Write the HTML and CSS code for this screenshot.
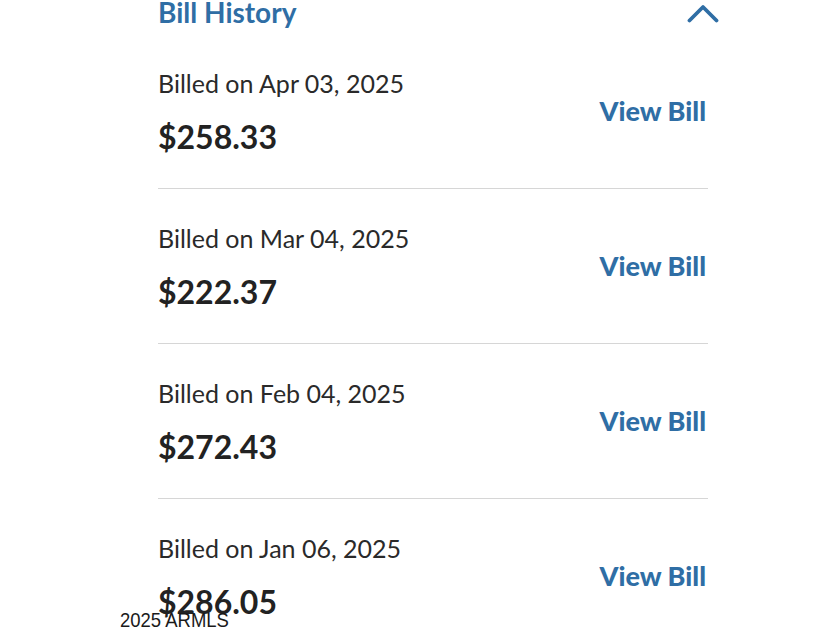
FILE: index.html
```html
<!DOCTYPE html>
<html>
<head>
<meta charset="utf-8">
<link rel="stylesheet" href="styles.css">
</head>
<body>
<div class="page">
  <section class="history">
    <header class="history-head">
      <h2 class="history-title">Bill History</h2>
      <svg class="chevron" width="32" height="20" viewBox="0 0 32 20" aria-hidden="true">
        <path d="M2.5 16.5 L16 3 L29.5 16.5" fill="none" stroke="#2f6ea5" stroke-width="3.8" stroke-linecap="round" stroke-linejoin="round"/>
      </svg>
    </header>
    <ul class="bill-list">
      <li class="bill">
        <div class="bill-info">
          <div class="bill-date">Billed on Apr 03, 2025</div>
          <div class="bill-amount">$258.33</div>
        </div>
        <a class="bill-link">View Bill</a>
      </li>
      <li class="bill">
        <div class="bill-info">
          <div class="bill-date">Billed on Mar 04, 2025</div>
          <div class="bill-amount">$222.37</div>
        </div>
        <a class="bill-link">View Bill</a>
      </li>
      <li class="bill">
        <div class="bill-info">
          <div class="bill-date">Billed on Feb 04, 2025</div>
          <div class="bill-amount">$272.43</div>
        </div>
        <a class="bill-link">View Bill</a>
      </li>
      <li class="bill">
        <div class="bill-info">
          <div class="bill-date">Billed on Jan 06, 2025</div>
          <div class="bill-amount">$286.05</div>
        </div>
        <a class="bill-link">View Bill</a>
      </li>
    </ul>
  </section>
  <div class="watermark">2025 ARMLS</div>
</div>
</body>
</html>
```

FILE: styles.css
```css
html, body {
  margin: 0;
  padding: 0;
  background: #ffffff;
}

body {
  width: 840px;
  height: 630px;
  overflow: hidden;
  font-family: Lato, "Noto Sans", sans-serif;
}

.page {
  position: relative;
  width: 840px;
  height: 630px;
}

.history {
  margin-left: 158px;
  width: 550px;
}

.history-head {
  display: flex;
  justify-content: space-between;
  align-items: flex-start;
  height: 42px;
  margin-top: -8px;
}

.history-title {
  margin: 0;
  font-size: 28px;
  line-height: 40px;
  font-weight: 700;
  color: #2f6ea5;
}

.chevron {
  margin-top: 12px;
  margin-right: -11px;
}

.bill-list {
  list-style: none;
  margin: 0;
  padding: 0;
}

.bill {
  display: flex;
  justify-content: space-between;
  align-items: center;
  height: 154px;
  border-bottom: 1px solid #d6d6d6;
}

.bill-info {
  display: flex;
  flex-direction: column;
  gap: 21px;
}

.bill-date {
  font-size: 25px;
  line-height: 30px;
  color: #2a2a2a;
}

.bill-amount {
  font-size: 32px;
  line-height: 36px;
  font-weight: 700;
  color: #222222;
}

.bill-link {
  font-size: 27px;
  font-weight: 900;
  color: #2f6ea5;
  margin-right: 2px;
  margin-bottom: 2px;
}

.watermark {
  position: absolute;
  left: 120px;
  top: 617px;
  font-family: "Liberation Sans", Arial, sans-serif;
  font-weight: 300;
  font-size: 21px;
  line-height: 21px;
  color: #1a1a1a;
  transform: scaleX(0.88);
  transform-origin: left top;
  white-space: nowrap;
}
```
